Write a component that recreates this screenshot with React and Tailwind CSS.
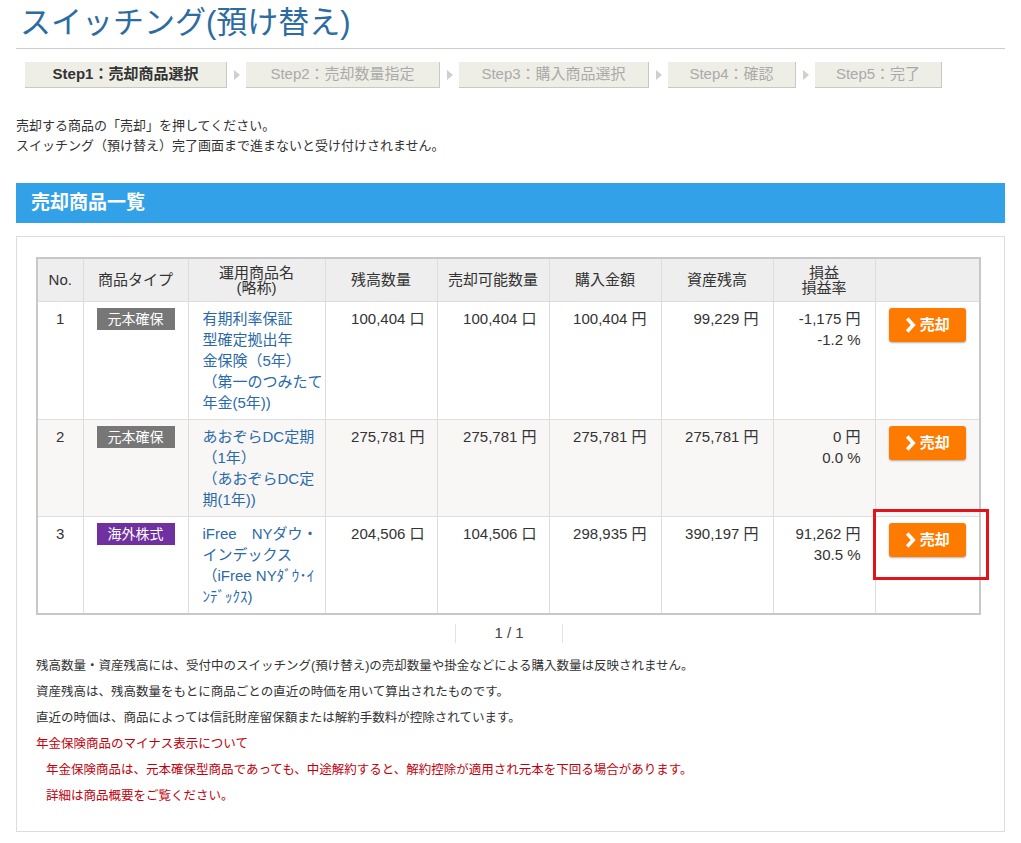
const steps = [
  { label: "Step1：売却商品選択", w: "w-[202px]", active: true },
  { label: "Step2：売却数量指定", w: "w-[194px]" },
  { label: "Step3：購入商品選択", w: "w-[190px]" },
  { label: "Step4：確認", w: "w-[128px]" },
  { label: "Step5：完了", w: "w-[127px]" },
];

const rows = [
  {
    no: "1",
    type: "元本確保",
    typeCls: "bg-[#777777]",
    name: ["有期利率保証", "型確定拠出年", "金保険（5年）", "（第一のつみたて", "年金(5年))"],
    qty: "100,404 口",
    sell: "100,404 口",
    buy: "100,404 円",
    asset: "99,229 円",
    pnl: "-1,175 円",
    rate: "-1.2 %",
    bg: "bg-white",
    h: "h-[118px]",
  },
  {
    no: "2",
    type: "元本確保",
    typeCls: "bg-[#777777]",
    name: ["あおぞらDC定期", "（1年）", "（あおぞらDC定", "期(1年))"],
    qty: "275,781 円",
    sell: "275,781 円",
    buy: "275,781 円",
    asset: "275,781 円",
    pnl: "0 円",
    rate: "0.0 %",
    bg: "bg-[#f8f7f6]",
    h: "h-[96px]",
  },
  {
    no: "3",
    type: "海外株式",
    typeCls: "bg-[#70309f]",
    name: ["iFree　NYダウ・", "インデックス", "（iFree NYﾀﾞｳ･ｲ", "ﾝﾃﾞｯｸｽ)"],
    qty: "204,506 口",
    sell: "104,506 口",
    buy: "298,935 円",
    asset: "390,197 円",
    pnl: "91,262 円",
    rate: "30.5 %",
    bg: "bg-white",
    h: "h-[96px]",
    highlight: true,
  },
];

function Arrow() {
  return (
    <div className="w-[19px] flex items-center justify-center">
      <svg width="6" height="10" viewBox="0 0 6 10">
        <path d="M0 0L6 5L0 10Z" fill="#cfcfcf" />
      </svg>
    </div>
  );
}

function SellButton() {
  return (
    <button className="inline-flex items-center justify-center gap-[4px] w-[77px] h-[34px] rounded-[3px] bg-[#ff7b00] text-white font-bold text-[15px] leading-none shadow-[0_1px_2px_rgba(0,0,0,0.3)]">
      <svg width="11" height="16" viewBox="0 0 11 16">
        <path d="M2.2 1.6L8.2 8L2.2 14.4" fill="none" stroke="#fff" strokeWidth="3.6" />
      </svg>
      <span>売却</span>
    </button>
  );
}

const td = "align-top border border-[#dddddd] pt-[6px] pb-[6px] text-[15px] leading-[21px]";
const th = "h-[43px] bg-[#eeeeee] border border-[#dddddd] font-normal text-[15px] leading-[15px] text-center text-[#333]";

export default function App() {
  return (
    <div className="w-[1021px] min-h-[843px] bg-white text-[#333] font-['Liberation_Sans','Noto_Sans_CJK_JP',sans-serif] px-4">
      <h1 className="pl-1 pt-[3px] text-[31px] leading-[40px] text-[#2d6ca0] font-normal">
        スイッチング(預け替え)
      </h1>
      <div className="mt-[5px] border-t border-[#cccccc]" />

      <div className="mt-[13px] pl-[9px] flex h-[26px]">
        {steps.map((s, i) => (
          <div key={s.label} className="flex">
            {i > 0 && <Arrow />}
            <div
              className={`${s.w} h-[26px] flex items-center justify-center bg-[#eeeee6] border-r border-b border-[#c9c9c0] text-[15px] ${
                s.active ? "font-bold text-[#333]" : "text-[#aaaaaa]"
              }`}
            >
              {s.label}
            </div>
          </div>
        ))}
      </div>

      <div className="mt-[28px] text-[13px] leading-[20px] text-[#333]">
        <p>売却する商品の「売却」を押してください。</p>
        <p>スイッチング（預け替え）完了画面まで進まないと受け付けされません。</p>
      </div>

      <div className="mt-[27px] h-[40px] bg-[#33a1e7] flex items-center pl-[15px]">
        <h2 className="text-white font-bold text-[19px]">売却商品一覧</h2>
      </div>

      <div className="mt-[13px] border border-[#dddddd] pl-[19px] pr-[22px] pt-[20px] pb-[22px]">
        <table className="w-[945px] table-fixed border-collapse border-2 border-[#c8c8c8]">
          <colgroup>
            <col className="w-[46px]" />
            <col className="w-[105px]" />
            <col className="w-[137px]" />
            <col className="w-[112px]" />
            <col className="w-[112px]" />
            <col className="w-[112px]" />
            <col className="w-[112px]" />
            <col className="w-[102px]" />
            <col className="w-[105px]" />
          </colgroup>
          <thead>
            <tr>
              <th className={th}>No.</th>
              <th className={th}>商品タイプ</th>
              <th className={th}>
                運用商品名
                <br />
                (略称)
              </th>
              <th className={th}>残高数量</th>
              <th className={th}>売却可能数量</th>
              <th className={th}>購入金額</th>
              <th className={th}>資産残高</th>
              <th className={th}>
                損益
                <br />
                損益率
              </th>
              <th className={th}></th>
            </tr>
          </thead>
          <tbody>
            {rows.map((r) => (
              <tr key={r.no} className={`${r.bg} ${r.h}`}>
                <td className={`${td} text-center`}>{r.no}</td>
                <td className={`${td} text-center`}>
                  <span
                    className={`inline-block w-[78px] h-[22px] leading-[22px] ${r.typeCls} text-white text-[14px] text-center`}
                  >
                    {r.type}
                  </span>
                </td>
                <td className={`${td} pl-[14px] text-[#2a6aa8] whitespace-nowrap`}>
                  {r.name.map((l, i) => (
                    <div key={i}>{l}</div>
                  ))}
                </td>
                <td className={`${td} text-right pr-[12px]`}>{r.qty}</td>
                <td className={`${td} text-right pr-[12px]`}>{r.sell}</td>
                <td className={`${td} text-right pr-[14px]`}>{r.buy}</td>
                <td className={`${td} text-right pr-[14px]`}>{r.asset}</td>
                <td className={`${td} text-right pr-[14px]`}>
                  <div>{r.pnl}</div>
                  <div>{r.rate}</div>
                </td>
                <td className={`${td} text-center relative`}>
                  <SellButton />
                  {r.highlight && (
                    <div className="absolute left-[-3px] top-[-8px] w-[116px] h-[71px] border-[3px] border-[#e3131b]" />
                  )}
                </td>
              </tr>
            ))}
          </tbody>
        </table>

        <div className="mt-[9px] flex justify-center">
          <div className="w-[108px] h-[19px] border-l border-r border-[#e2e2e2] flex items-center justify-center text-[15px] text-[#444]">
            1 / 1
          </div>
        </div>

        <div className="mt-[10px] text-[12.5px] leading-[26px]">
          <p>残高数量・資産残高には、受付中のスイッチング(預け替え)の売却数量や掛金などによる購入数量は反映されません。</p>
          <p>資産残高は、残高数量をもとに商品ごとの直近の時価を用いて算出されたものです。</p>
          <p>直近の時価は、商品によっては信託財産留保額または解約手数料が控除されています。</p>
          <p className="text-[#c0000c]">年金保険商品のマイナス表示について</p>
          <p className="text-[#c0000c] pl-[10px]">
            年金保険商品は、元本確保型商品であっても、中途解約すると、解約控除が適用され元本を下回る場合があります。
          </p>
          <p className="text-[#c0000c] pl-[10px]">詳細は商品概要をご覧ください。</p>
        </div>
      </div>
    </div>
  );
}
